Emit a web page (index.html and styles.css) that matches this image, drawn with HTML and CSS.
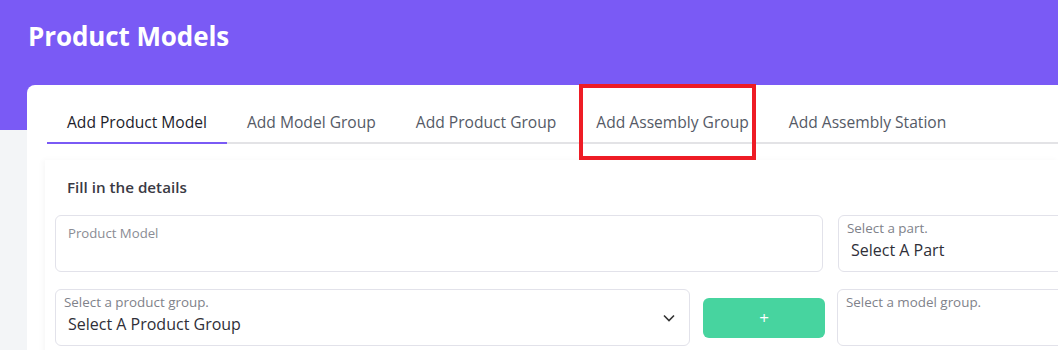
FILE: index.html
```html
<!DOCTYPE html>
<html>
<head>
<meta charset="utf-8">
<link rel="stylesheet" href="styles.css">
</head>
<body>
<div class="page">
  <header class="header">
    <h1 class="title">Product Models</h1>
  </header>
  <main class="card">
    <nav class="tabs">
      <div class="tab active">Add Product Model</div>
      <div class="tab">Add Model Group</div>
      <div class="tab">Add Product Group</div>
      <div class="tab highlighted">Add Assembly Group</div>
      <div class="tab">Add Assembly Station</div>
    </nav>
    <section class="panel">
      <h2 class="panel-title">Fill in the details</h2>
      <div class="form-grid">
        <div class="field text-field">
          <span class="placeholder">Product Model</span>
        </div>
        <div class="field select-field">
          <span class="label">Select a part.</span>
          <span class="value">Select A Part</span>
        </div>
        <div class="row-combo">
          <div class="field select-field with-chevron">
            <span class="label">Select a product group.</span>
            <span class="value">Select A Product Group</span>
            <svg class="chevron" width="12" height="8" viewBox="0 0 12 8"><path d="M1 1.5 L6 6.5 L11 1.5" fill="none" stroke="#333" stroke-width="1.6"/></svg>
          </div>
          <button class="add-btn">+</button>
        </div>
        <div class="field select-field shift">
          <span class="label">Select a model group.</span>
        </div>
      </div>
    </section>
  </main>
</div>
</body>
</html>
```

FILE: styles.css
```css
* { box-sizing: border-box; }
html, body { margin: 0; padding: 0; }
body {
  background: #f3f5f7;
  font-family: "Open Sans", "Noto Sans", sans-serif;
  overflow: hidden;
  width: 1058px;
  height: 350px;
}
.page { position: relative; height: 350px; overflow: hidden; }
.header {
  background: #7a5af5;
  height: 130px;
  padding: 18px 0 0 28px;
}
.title {
  margin: 0;
  color: #fff;
  font-size: 26px;
  font-weight: 700;
  letter-spacing: -0.1px;
  line-height: 36px;
}
.card {
  background: #fff;
  margin: -45px 0 0 27px;
  border-radius: 8px 0 0 0;
  padding: 21px 0 0 20px;
  height: 265px;
}
.tabs {
  display: flex;
  border-bottom: 2px solid #e3e3e6;
  height: 38px;
}
.tab {
  position: relative;
  padding: 0 20px;
  height: 38px;
  line-height: 33px;
  font-size: 15.6px;
  color: #555a66;
  white-space: nowrap;
}
.tab.active {
  color: #1d1d2b;
  border-bottom: 2px solid #7a5af5;
}
.tab.highlighted::after {
  content: "";
  position: absolute;
  left: 3px;
  right: 13px;
  top: -22px;
  bottom: -16px;
  border: 4px solid #ee1c25;
}
.panel {
  margin: 16px 0 0 -2px;
  background: #fff;
  box-shadow: -2px 0 6px rgba(0,0,0,0.035);
  padding: 20px 0 0 10px;
  height: 200px;
}
.panel-title {
  margin: 0 0 21px 12px;
  font-size: 15.2px;
  font-weight: 600;
  color: #3a3a44;
  line-height: 14px;
}
.form-grid {
  display: grid;
  grid-template-columns: 770px 260px;
  column-gap: 13px;
  row-gap: 17px;
}
.field {
  position: relative;
  height: 57px;
  border: 1px solid #e2e2ea;
  border-radius: 6px;
  background: #fff;
  display: flex;
  flex-direction: column;
}
.text-field { padding: 9px 0 0 12px; margin-right: 2px; }
.placeholder {
  font-size: 13.2px;
  color: #8a8c94;
  line-height: 16px;
}
.select-field { padding: 4px 0 0 8px; }
.shift { margin-left: -1px; }
.label {
  font-size: 13.4px;
  color: #80828a;
  line-height: 16px;
}
.value {
  margin-top: 4px;
  padding-left: 4px;
  font-size: 16px;
  color: #2f2f38;
  line-height: 20px;
}
.row-combo {
  display: flex;
  align-items: center;
  gap: 13px;
}
.row-combo .field { flex: 0 0 635px; }
.chevron {
  position: absolute;
  right: 14px;
  top: 24px;
}
.add-btn {
  width: 122px;
  height: 40px;
  border: none;
  border-radius: 6px;
  background: #47d49f;
  color: #fff;
  font-size: 17px;
  font-family: inherit;
  line-height: 20px;
  padding: 0;
}
```
